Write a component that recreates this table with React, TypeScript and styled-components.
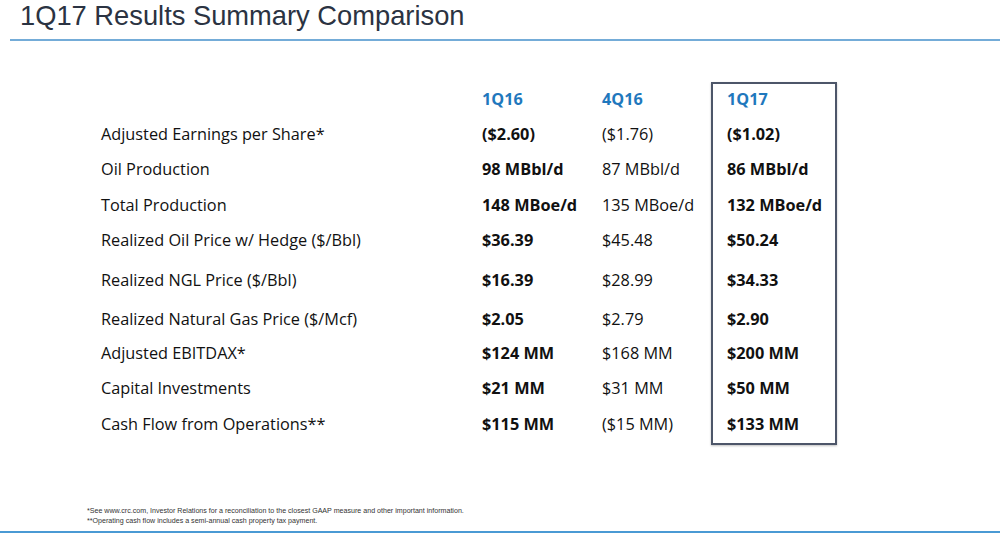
import React from 'react';
import styled, { createGlobalStyle } from 'styled-components';

const GlobalStyle = createGlobalStyle`
  body {
    margin: 0;
    background: #ffffff;
    font-family: 'Open Sans', 'Liberation Sans', sans-serif;
  }
`;

type Row = {
  label: string;
  q116: string;
  q416: string;
  q117: string;
  height: number;
};

// row heights follow the uneven spacing of the original slide
const ROWS: Row[] = [
  { label: 'Adjusted Earnings per Share*', q116: '($2.60)', q416: '($1.76)', q117: '($1.02)', height: 33 },
  { label: 'Oil Production', q116: '98 MBbl/d', q416: '87 MBbl/d', q117: '86 MBbl/d', height: 38 },
  { label: 'Total Production', q116: '148 MBoe/d', q416: '135 MBoe/d', q117: '132 MBoe/d', height: 34 },
  { label: 'Realized Oil Price w/ Hedge ($/Bbl)', q116: '$36.39', q416: '$45.48', q117: '$50.24', height: 36 },
  { label: 'Realized NGL Price ($/Bbl)', q116: '$16.39', q416: '$28.99', q117: '$34.33', height: 44 },
  { label: 'Realized Natural Gas Price ($/Mcf)', q116: '$2.05', q416: '$2.79', q117: '$2.90', height: 34 },
  { label: 'Adjusted EBITDAX*', q116: '$124 MM', q416: '$168 MM', q117: '$200 MM', height: 34 },
  { label: 'Capital Investments', q116: '$21 MM', q416: '$31 MM', q117: '$50 MM', height: 36 },
  { label: 'Cash Flow from Operations**', q116: '$115 MM', q416: '($15 MM)', q117: '$133 MM', height: 36 },
];

const HEAD_HEIGHT = 34;
const BOX_TAIL = 4;

function App() {
  const rowTemplate = [HEAD_HEIGHT, ...ROWS.map((r) => r.height), BOX_TAIL]
    .map((h) => `${h}px`)
    .join(' ');

  return (
    <>
      <GlobalStyle />
      <Slide>
        <TitleBar>
          <Title>1Q17 Results Summary Comparison</Title>
        </TitleBar>
        <Table style={{ gridTemplateRows: rowTemplate }}>
          <Highlight />
          <Head $col={2}>1Q16</Head>
          <Head $col={3}>4Q16</Head>
          <Head $col={4}>1Q17</Head>
          {ROWS.map((r, i) => (
            <React.Fragment key={r.label}>
              <Cell $row={i + 2} $col={1}>{r.label}</Cell>
              <Cell $row={i + 2} $col={2} $bold>{r.q116}</Cell>
              <Cell $row={i + 2} $col={3}>{r.q416}</Cell>
              <Cell $row={i + 2} $col={4} $bold>{r.q117}</Cell>
            </React.Fragment>
          ))}
        </Table>
        <Footnotes>
          <Note>*See www.crc.com, Investor Relations for a reconciliation to the closest GAAP measure and other important information.</Note>
          <Note>**Operating cash flow includes a semi-annual cash property tax payment.</Note>
        </Footnotes>
      </Slide>
    </>
  );
}

const Slide = styled.div`
  width: 1000px;
  height: 535px;
  display: flex;
  flex-direction: column;
  overflow: hidden;
`;

const TitleBar = styled.div`
  flex-shrink: 0;
  margin-left: 10px;
  height: 41px;
  padding-left: 10px;
  box-sizing: border-box;
  border-bottom: 2px solid #74acd8;
`;

const Title = styled.h1`
  margin: 0;
  font-family: 'Liberation Sans', Arial, sans-serif;
  font-weight: normal;
  font-size: 27.3px;
  line-height: 32px;
  color: #2b3342;
`;

const Table = styled.div`
  flex-shrink: 0;
  margin: 41px 0 0 101px;
  display: grid;
  grid-template-columns: 381px 120px 109px 126px;
  width: max-content;
`;

const Highlight = styled.div`
  grid-column: 4;
  grid-row: 1 / -1;
  border: 2px solid #4d5669;
  box-shadow: 0 1px 2px rgba(0, 0, 0, 0.25);
`;

const Head = styled.div<{ $col: number }>`
  grid-column: ${(p) => p.$col};
  grid-row: 1;
  align-self: center;
  padding-left: ${(p) => (p.$col === 4 ? '16px' : '0')};
  font-size: 16.2px;
  font-weight: bold;
  color: #1f78bd;
`;

const Cell = styled.div<{ $row: number; $col: number; $bold?: boolean }>`
  grid-column: ${(p) => p.$col};
  grid-row: ${(p) => p.$row};
  align-self: center;
  padding-top: 2px;
  padding-left: ${(p) => (p.$col === 4 ? '16px' : '0')};
  font-size: 16.3px;
  line-height: 24px;
  font-weight: ${(p) => (p.$bold ? 'bold' : 'normal')};
  color: #111111;
  white-space: nowrap;
`;

const Footnotes = styled.div`
  flex-shrink: 0;
  margin-top: auto;
  margin-bottom: 2px;
  padding: 0 0 5px 87px;
  border-bottom: 2px solid #4a9ad4;
`;

const Note = styled.div`
  font-family: 'Liberation Sans', Arial, sans-serif;
  font-size: 7.1px;
  line-height: 10px;
  color: #333333;
`;

export default App;
